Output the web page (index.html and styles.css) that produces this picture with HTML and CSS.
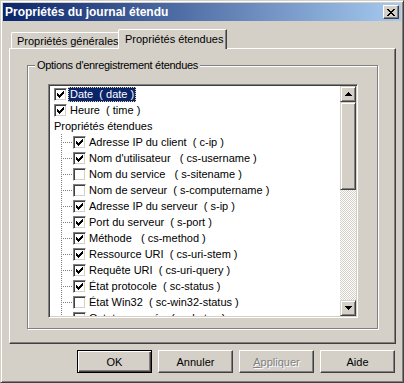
FILE: index.html
```html
<!DOCTYPE html>
<html lang="fr">
<head>
  <meta charset="UTF-8" />
  <meta name="viewport" content="width=device-width, initial-scale=1" />
  <title>Propriétés du journal étendu</title>
  <link rel="stylesheet" href="styles.css">
</head>
<body>

  <svg class="defs" width="0" height="0" aria-hidden="true">
    <defs>
      <path id="tick" d="M2 4h1v3h-1zM3 5h1v3h-1zM4 6h1v3h-1zM5 5h1v3h-1zM6 4h1v3h-1zM7 3h1v3h-1zM8 2h1v3h-1z" />
    </defs>
  </svg>

  <div class="window">
    <div class="titlebar">
      <span class="title">Propriétés du journal étendu</span>
      <div class="close">
        <svg width="8" height="7" viewBox="0 0 8 7"><path d="M0 0h2v1h-2zM6 0h2v1h-2zM1 1h2v1h-2zM5 1h2v1h-2zM2 2h4v1h-4zM3 3h2v1h-2zM2 4h4v1h-4zM1 5h2v1h-2zM5 5h2v1h-2zM0 6h2v1h-2zM6 6h2v1h-2z" /></svg>
      </div>
    </div>

    <div class="client">
      <div class="tabs">
        <div class="tab">Propriétés générales</div>
        <div class="tab active">Propriétés étendues</div>
      </div>

      <div class="panel">
        <div class="group">
          <div class="legend">Options d'enregistrement étendues</div>
          <div class="listbox">
            <ul class="items">
              <li class="sel"><span class="cb on"><svg viewBox="0 0 11 11"><use href="#tick" /></svg></span><span class="label">Date  ( date )</span></li>
              <li><span class="cb on"><svg viewBox="0 0 11 11"><use href="#tick" /></svg></span><span class="label">Heure  ( time )</span></li>
              <li class="head"><span class="label">Propriétés étendues</span></li>
              <li class="child"><span class="branch"></span><span class="cb on"><svg viewBox="0 0 11 11"><use href="#tick" /></svg></span><span class="label">Adresse IP du client  ( c-ip )</span></li>
              <li class="child"><span class="branch"></span><span class="cb on"><svg viewBox="0 0 11 11"><use href="#tick" /></svg></span><span class="label">Nom d'utilisateur   ( cs-username )</span></li>
              <li class="child"><span class="branch"></span><span class="cb"></span><span class="label">Nom du service   ( s-sitename )</span></li>
              <li class="child"><span class="branch"></span><span class="cb"></span><span class="label">Nom de serveur  ( s-computername )</span></li>
              <li class="child"><span class="branch"></span><span class="cb on"><svg viewBox="0 0 11 11"><use href="#tick" /></svg></span><span class="label">Adresse IP du serveur  ( s-ip )</span></li>
              <li class="child"><span class="branch"></span><span class="cb on"><svg viewBox="0 0 11 11"><use href="#tick" /></svg></span><span class="label">Port du serveur  ( s-port )</span></li>
              <li class="child"><span class="branch"></span><span class="cb on"><svg viewBox="0 0 11 11"><use href="#tick" /></svg></span><span class="label">Méthode   ( cs-method )</span></li>
              <li class="child"><span class="branch"></span><span class="cb on"><svg viewBox="0 0 11 11"><use href="#tick" /></svg></span><span class="label">Ressource URI  ( cs-uri-stem )</span></li>
              <li class="child"><span class="branch"></span><span class="cb on"><svg viewBox="0 0 11 11"><use href="#tick" /></svg></span><span class="label">Requête URI  ( cs-uri-query )</span></li>
              <li class="child"><span class="branch"></span><span class="cb on"><svg viewBox="0 0 11 11"><use href="#tick" /></svg></span><span class="label">État protocole  ( sc-status )</span></li>
              <li class="child"><span class="branch"></span><span class="cb"></span><span class="label">État Win32  ( sc-win32-status )</span></li>
              <li class="child"><span class="branch"></span><span class="cb"></span><span class="label">Octets envoyés  ( sc-bytes )</span></li>
            </ul>
            <div class="scrollbar">
              <div class="arrow">
                <svg width="7" height="4" viewBox="0 0 7 4"><path d="M3 0h1v1h-1zM2 1h3v1h-3zM1 2h5v1h-5zM0 3h7v1h-7z" /></svg>
              </div>
              <div class="thumb"></div>
              <div class="track"></div>
              <div class="arrow">
                <svg width="7" height="4" viewBox="0 0 7 4"><path d="M0 0h7v1h-7zM1 1h5v1h-5zM2 2h3v1h-3zM3 3h1v1h-1z" /></svg>
              </div>
            </div>
          </div>
        </div>
      </div>

      <div class="buttons">
        <button class="btn default">OK</button>
        <button class="btn">Annuler</button>
        <button class="btn disabled"><u>A</u>ppliquer</button>
        <button class="btn">Aide</button>
      </div>
    </div>
  </div>

</body>
</html>
```

FILE: styles.css
```css
body {
  margin: 0;
  font-family: "Liberation Sans", Arial, sans-serif;
  font-size: 11px;
  color: #000;
  background: #d4d0c8;
}
.defs {
  position: absolute;
  width: 0;
  height: 0;
}
.window {
  width: 404px;
  height: 383px;
  box-sizing: border-box;
  background: #d4d0c8;
  border: 1px solid;
  border-color: #d4d0c8 #404040 #404040 #d4d0c8;
  box-shadow: inset 1px 1px #fff, inset -1px -1px #808080;
  padding: 2px;
  display: flex;
  flex-direction: column;
}
.titlebar {
  height: 18px;
  display: flex;
  align-items: center;
  justify-content: space-between;
  padding: 0 2px;
  background: linear-gradient(to right, #0a246a, #a6caf0);
}
.title {
  color: #fff;
  font-weight: bold;
  font-size: 12px;
}
.close {
  width: 16px;
  height: 14px;
  box-sizing: border-box;
  display: flex;
  align-items: center;
  justify-content: center;
  background: #d4d0c8;
  border: 1px solid;
  border-color: #fff #404040 #404040 #fff;
  box-shadow: inset -1px -1px #808080;
  padding-right: 1px;
}
.client {
  flex: 1;
  padding: 8px 5px 0 6px;
}

/* onglets */
.tabs {
  display: flex;
  align-items: flex-end;
  padding-left: 2px;
  margin-bottom: -1px;
}
.tab {
  box-sizing: border-box;
  height: 16px;
  width: 109px;
  margin-bottom: 1px;
  padding: 1px 0 0 5px;
  line-height: 14px;
  white-space: nowrap;
  border-top: 1px solid #fff;
  border-left: 1px solid #fff;
  border-right: 1px solid #404040;
  border-top-left-radius: 2px;
  box-shadow: inset -1px 0 #808080;
}
.tab.active {
  position: relative;
  z-index: 1;
  height: 20px;
  width: 109px;
  margin-left: -2px;
  margin-bottom: 0;
  padding: 2px 0 0 6px;
  background: #d4d0c8;
}
.panel {
  box-sizing: border-box;
  width: 387px;
  height: 296px;
  border: 1px solid;
  border-color: #fff #404040 #404040 #fff;
  box-shadow: inset -1px -1px #808080;
  padding: 16px 0 0 17px;
}

/* groupe */
.group {
  box-sizing: border-box;
  width: 351px;
  height: 264px;
  border: 1px solid #808080;
  box-shadow: inset 1px 1px #fff, 1px 1px #fff;
}
.legend {
  width: fit-content;
  margin: -8px 0 0 7px;
  padding: 0 2px;
  line-height: 14px;
  letter-spacing: -0.3px;
  background: #d4d0c8;
}
.listbox {
  box-sizing: border-box;
  width: 310px;
  height: 234px;
  margin: 12px 0 0 20px;
  border: 1px solid;
  border-color: #808080 #fff #fff #808080;
  box-shadow: inset 1px 1px #404040, inset -1px -1px #d4d0c8;
  padding: 1px;
  display: flex;
}
.items {
  flex: 1;
  list-style: none;
  margin: 0;
  padding: 0;
  background: #fff;
  overflow: hidden;
}
.items li {
  height: 16px;
  display: flex;
  align-items: center;
  padding-left: 4px;
  white-space: pre;
}
.cb {
  box-sizing: border-box;
  width: 13px;
  height: 13px;
  flex: none;
  margin-right: 1px;
  background: #fff;
  border: 1px solid;
  border-color: #808080 #fff #fff #808080;
  box-shadow: inset 1px 1px #404040, inset -1px -1px #d4d0c8;
}
.cb svg {
  display: block;
  width: 11px;
  height: 11px;
  shape-rendering: crispEdges;
}
.label {
  line-height: 15px;
  padding: 0 2px;
}
.head .label {
  padding: 0;
}
.sel .label {
  background: #0a246a;
  color: #fff;
  outline: 1px dotted #e8d490;
  outline-offset: -1px;
}
.branch {
  width: 19px;
  height: 16px;
  flex: none;
  background:
    repeating-linear-gradient(to bottom, #808080 0 1px, transparent 1px 2px) 7px 0 / 1px 16px no-repeat,
    repeating-linear-gradient(to right, #808080 0 1px, transparent 1px 2px) 9px 8px / 10px 1px no-repeat;
}

/* barre de défilement */
.scrollbar {
  width: 16px;
  display: flex;
  flex-direction: column;
}
.arrow, .thumb {
  box-sizing: border-box;
  background: #d4d0c8;
  border: 1px solid;
  border-color: #d4d0c8 #404040 #404040 #d4d0c8;
  box-shadow: inset 1px 1px #fff, inset -1px -1px #808080;
}
.arrow {
  height: 16px;
  display: flex;
  align-items: center;
  justify-content: center;
}
.arrow svg {
  display: block;
  shape-rendering: crispEdges;
}
.thumb {
  height: 88px;
}
.track {
  flex: 1;
  background: repeating-conic-gradient(#fff 0 25%, #d4d0c8 0 50%) 0 0 / 2px 2px;
}

/* boutons */
.buttons {
  display: flex;
  justify-content: flex-end;
  gap: 6px;
  margin: 6px 1px 0 0;
}
.btn {
  box-sizing: border-box;
  width: 75px;
  height: 23px;
  padding: 0;
  font-family: inherit;
  font-size: 11px;
  font-weight: normal;
  color: #000;
  background: #d4d0c8;
  border: 1px solid;
  border-color: #fff #404040 #404040 #fff;
  box-shadow: inset -1px -1px #808080;
}
.btn.default {
  border-color: #000;
  box-shadow: inset 1px 1px #fff, inset -1px -1px #404040, inset -2px -2px #808080;
}
.btn.disabled {
  color: #808080;
  text-shadow: 1px 1px #fff;
}
```
